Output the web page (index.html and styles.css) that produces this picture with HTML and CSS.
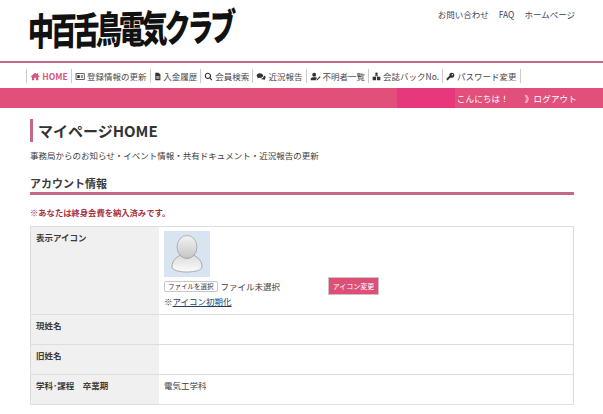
FILE: index.html
```html
<!DOCTYPE html>
<html lang="ja">
<head>
  <meta charset="UTF-8" />
  <title>マイページHOME</title>
  <link rel="stylesheet" href="styles.css">
</head>
<body>

  <header class="site-head">
    <div class="logo">中百舌鳥電気クラブ</div>
    <ul class="sub-links">
      <li><a href="#">お問い合わせ</a></li>
      <li><a href="#">FAQ</a></li>
      <li><a href="#">ホームページ</a></li>
    </ul>
  </header>

  <nav class="main-nav">
    <a href="#" class="active">
      <svg viewBox="0 0 16 14"><path d="M8 1 1 7l.8 1L3 7v6h3.6V9h2.8v4H13V7l1.200 1 .8-1-2.500-2.200V2h-1.700v1.300z"/></svg>HOME</a>
    <a href="#">
      <svg viewBox="0 0 16 14"><path fill-rule="evenodd" d="M1 2h14v10H1zm1.200 1.200v7.600h11.600V3.200zM3.500 5h4v4.500h-4zM9 5.500h3.500v1H9zm0 2h3.500v1H9z"/></svg>登録情報の更新</a>
    <a href="#">
      <svg viewBox="0 0 12 14"><path fill-rule="evenodd" d="M2 1h5l3 3v9H2zm1.500 6v1h5V7zm0 2v1h5V9z"/></svg>入金履歴</a>
    <a href="#">
      <svg viewBox="0 0 14 14"><path fill-rule="evenodd" d="M6 1a5 5 0 0 1 4 8l3 3-1.300 1.300-3-3A5 5 0 1 1 6 1zm0 1.800a3.200 3.200 0 1 0 0 6.400 3.200 3.200 0 0 0 0-6.400z"/></svg>会員検索</a>
    <a href="#">
      <svg viewBox="0 0 16 14"><path d="M6 2c3 0 5 1.600 5 3.600S9 9.200 6 9.200c-.6 0-1.100 0-1.700-.2L2 10.200l.6-1.900C1.600 7.600 1 6.700 1 5.600 1 3.600 3 2 6 2z"/><path d="M12 5.500c1.800.5 3 1.700 3 3.100 0 .9-.5 1.700-1.300 2.300l.5 1.700-2.100-1c-1.800.3-3.600-.2-4.500-1.200 2.700-.1 5-1.800 4.400-4.900z"/></svg>近況報告</a>
    <a href="#">
      <svg viewBox="0 0 17 14"><circle cx="6.500" cy="4.300" r="3"/><path d="M1 13v-1.500C1 9.500 2.500 8 4.500 8h4c1 0 1.800.4 2.400 1L9 12l-.2 1z"/><path d="m10 13 .3-1.500 5-5 1.200 1.200-5 5z"/></svg>不明者一覧</a>
    <a href="#">
      <svg viewBox="0 0 14 14"><circle cx="7" cy="2.800" r="2"/><path d="M1 7.500h5.300V13H1zm6.700 0H13V13H7.700z"/><path d="M4 6.800C4 5.600 5 5 7 5s3 .6 3 1.800z"/></svg>会誌バックNo.</a>
    <a href="#">
      <svg viewBox="0 0 14 14"><path fill-rule="evenodd" d="M9 1a4 4 0 1 1-1.500 7.700L6.500 9.700H5v1.500H3.500v1.500H1v-2.500l4.400-4.400A4 4 0 0 1 9 1zm1 2a1.100 1.100 0 1 0 0 2.200A1.100 1.100 0 0 0 10 3z"/></svg>パスワード変更</a>
  </nav>

  <div class="greet-bar">
    <div class="greet-name"></div>
    <span class="greet-text">こんにちは！</span>
    <a href="#" class="logout">》ログアウト</a>
  </div>

  <main class="content">
    <h1 class="page-title">マイページHOME</h1>
    <p class="lead">事務局からのお知らせ・イベント情報・共有ドキュメント・近況報告の更新</p>

    <h2 class="section-title">アカウント情報</h2>
    <p class="notice">※あなたは終身会費を納入済みです。</p>

    <table class="info-table">
      <tr class="row-icon">
        <th>表示アイコン</th>
        <td>
          <div class="avatar">
            <svg viewBox="0 0 46 46">
              <defs>
                <linearGradient id="headGrad" x1="0" y1="0" x2="0" y2="1">
                  <stop offset="0" stop-color="#f4f4f4"/>
                  <stop offset="1" stop-color="#c4c4c4"/>
                </linearGradient>
                <linearGradient id="bodyGrad" x1="0" y1="0" x2="0" y2="1">
                  <stop offset="0" stop-color="#dcdcdc"/>
                  <stop offset="1" stop-color="#fbfbfb"/>
                </linearGradient>
              </defs>
              <path d="M17 24c-5 2-9 6-9 12 0 3 7 5 15 5s15-2 15-5c0-6-4-10-9-12z" fill="url(#bodyGrad)" stroke="#8f8f8f" stroke-width=".7"/>
              <ellipse cx="23" cy="16" rx="10" ry="11.500" fill="url(#headGrad)" stroke="#9a9a9a" stroke-width=".7"/>
            </svg>
          </div>
          <div class="file-row">
            <div class="file-pick">
              <button type="button" class="file-btn">ファイルを選択</button>
              <span>ファイル未選択</span>
            </div>
            <button type="button" class="icon-submit">アイコン変更</button>
          </div>
          <div class="reset-line">※<a href="#">アイコン初期化</a></div>
        </td>
      </tr>
      <tr><th>現姓名</th><td></td></tr>
      <tr><th>旧姓名</th><td></td></tr>
      <tr><th>学科･課程　卒業期</th><td>電気工学科</td></tr>
    </table>
  </main>

</body>
</html>
```

FILE: styles.css
```css
body {
  margin: 0;
  font-family: "Noto Sans CJK JP", "Noto Sans", sans-serif;
  font-size: 8.5px;
  color: #3c3c3c;
  background: #fff;
}

a {
  color: inherit;
  text-decoration: none;
}

.site-head {
  height: 61px;
  display: flex;
  justify-content: space-between;
  padding: 0 28px;
  border-bottom: 2px solid #c4688a;
}

.logo {
  flex: none;
  align-self: flex-start;
  font-size: 26px;
  font-weight: 900;
  line-height: 1;
  color: #111;
  white-space: nowrap;
  letter-spacing: -3.200px;
  padding-right: 4px;
  margin-top: 11px;
  transform: rotate(-1.500deg) scale(1, 1.450) skewX(-3deg);
  transform-origin: left top;
}

.sub-links {
  list-style: none;
  margin: 8px 0 0;
  padding: 0;
  display: flex;
  gap: 10px;
  font-size: 8.500px;
  line-height: 12px;
  color: #3a4660;
}

.main-nav {
  display: flex;
  align-items: center;
  height: 24px;
  margin: 1px 0 0 26px;
  font-size: 8.500px;
  color: #4a4a4a;
}

.main-nav a {
  display: flex;
  align-items: center;
  gap: 2px;
  height: 14px;
  padding: 0 3px;
  border-left: 1px solid #ccc;
  white-space: nowrap;
}

.main-nav a:last-child {
  border-right: 1px solid #ccc;
}

.main-nav svg {
  height: 9px;
  width: auto;
  fill: #333;
}

.main-nav .active {
  color: #d8557f;
  font-weight: 700;
}

.main-nav .active svg {
  fill: #d8557f;
}

.greet-bar {
  height: 20px;
  background: #e0507a;
  display: flex;
  justify-content: flex-end;
  align-items: center;
  padding-right: 26px;
  color: #fff;
  font-size: 8.500px;
  letter-spacing: .2px;
}

.greet-name {
  width: 58px;
  height: 100%;
  background: #e8387c;
  margin-right: 2px;
}

.greet-text {
  width: 68px;
}

.content {
  padding: 11px 29px 0 30px;
}

.page-title {
  margin: 0;
  padding-left: 5px;
  border-left: 3px solid #c4688a;
  font-size: 15px;
  font-weight: 700;
  line-height: 23px;
  color: #333;
}

.lead {
  margin: 7px 0 0;
  line-height: 13px;
}

.section-title {
  margin: 14px 0 0;
  padding-bottom: 1px;
  border-bottom: 3px solid #c4688a;
  font-size: 11px;
  font-weight: 700;
  line-height: 15px;
}

.notice {
  margin: 11px 0 0;
  line-height: 12px;
  font-weight: 700;
  color: #a8303f;
  font-size: 8.300px;
}

.info-table {
  width: 100%;
  margin-top: 8px;
  border-collapse: collapse;
  border: 1px solid #ddd;
}

.info-table th,
.info-table td {
  border-top: 1px solid #ddd;
  padding: 4px 5px 6px;
  height: 19px;
  vertical-align: top;
  text-align: left;
  line-height: 12px;
}

.info-table th {
  width: 118px;
  background: #f0f0f0;
  font-weight: 700;
}

.avatar {
  width: 46px;
  height: 46px;
  background: #d8e5f1;
}

.avatar svg {
  display: block;
  width: 46px;
  height: 46px;
}

.file-row {
  display: flex;
  align-items: center;
}

.file-pick {
  display: flex;
  align-items: center;
  gap: 3px;
  width: 164px;
  font-size: 8.500px;
}

.file-btn {
  height: 9px;
  padding: 0 3px;
  box-sizing: content-box;
  background: #fff;
  border: 1px solid #c8c8c8;
  border-radius: 2px;
  font-family: inherit;
  font-size: 6.500px;
  line-height: 9px;
  color: #333;
}

.icon-submit {
  width: 51px;
  height: 18px;
  padding: 0;
  background: #dc5078;
  border: 1px solid #d0c0c4;
  color: #fff;
  font-family: inherit;
  font-size: 7px;
}

.reset-line {
  line-height: 13px;
}

.reset-line a {
  color: #1f3f66;
  text-decoration: underline;
}
```
